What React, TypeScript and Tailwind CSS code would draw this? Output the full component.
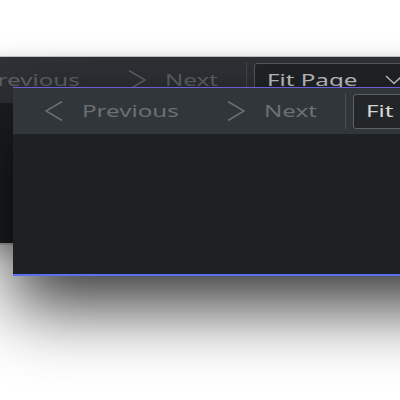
import React from 'react';

// Thin chevron drawn as a stroke, like the Breeze go-previous/go-next icons
function Chevron({ dir, className }: { dir: 'left' | 'right'; className?: string }) {
  const pts = dir === 'left' ? '17,0.5 1,10 17,19.5' : '1,0.5 17,10 1,19.5';
  return (
    <svg className={className} width="18" height="20" viewBox="0 0 18 20" fill="none">
      <polyline points={pts} stroke="currentColor" strokeWidth={1.5} />
    </svg>
  );
}

function ChevronDown({ className }: { className?: string }) {
  return (
    <svg className={className} width="18" height="10" viewBox="0 0 18 10" fill="none">
      <polyline points="1,1 9,8.5 17,1" stroke="currentColor" strokeWidth={1.5} />
    </svg>
  );
}

// Text in the screenshot is stretched horizontally, so every label is scaled on x
function Label({ text, width }: { text: string; width: string }) {
  return (
    <div className={`${width} shrink-0 overflow-visible`}>
      <span className="inline-block origin-left scale-x-[1.42] whitespace-nowrap">{text}</span>
    </div>
  );
}

interface WindowProps {
  active: boolean;
  className?: string;
}

function ViewerWindow({ active, className }: WindowProps) {
  return (
    <div
      className={`absolute w-[500px] h-[189px] flex flex-col overflow-hidden ${
        active
          ? 'border-t border-t-[#6b5fd9] border-b-2 border-b-[#5b6ff0] shadow-[0_30px_70px_rgba(0,0,0,0.8)]'
          : 'border-t border-t-[#c2c2c2] border-b-2 border-b-[#b0b0b0] shadow-[0_8px_20px_rgba(0,0,0,0.25)]'
      } ${className ?? ''}`}
    >
      {/* Toolbar */}
      <div
        className={`h-[46px] shrink-0 flex items-center text-[17px] ${
          active ? 'bg-[#31363b] text-[#6c7075]' : 'bg-[#2e3135] text-[#5f6367]'
        }`}
        style={{ fontFamily: '"Noto Sans", sans-serif' }}
      >
        <Chevron dir="left" className="ml-[32px] shrink-0" />
        <div className="ml-[19px]">
          <Label text="Previous" width="w-[98px]" />
        </div>
        <Chevron dir="right" className="ml-[47px] shrink-0" />
        <div className="ml-[19px]">
          <Label text="Next" width="w-[56px]" />
        </div>
        <div className={`ml-[25px] w-px h-[36px] shrink-0 ${active ? 'bg-[#4b5055]' : 'bg-[#44484c]'}`} />
        <div
          className={`ml-[7px] h-[35px] w-[160px] shrink-0 rounded-[3px] border flex items-center pl-[12px] pr-[10px] ${
            active
              ? 'border-[#5c6166] bg-[#232629] text-[#d6d6d6]'
              : 'border-[#55595e] bg-[#212427] text-[#c6c6c6]'
          }`}
        >
          <Label text="Fit Page" width="w-[100px]" />
          <ChevronDown className="ml-auto shrink-0" />
        </div>
      </div>
      {/* Page area */}
      <div className={`flex-1 ${active ? 'bg-[#1e2124]' : 'bg-[#1c1e21]'}`} />
    </div>
  );
}

export default function App() {
  return (
    <div className="relative w-[400px] h-[400px] overflow-hidden bg-white">
      <ViewerWindow active={false} className="left-[-86px] top-[56px]" />
      <ViewerWindow active className="left-[13px] top-[87px]" />
    </div>
  );
}
